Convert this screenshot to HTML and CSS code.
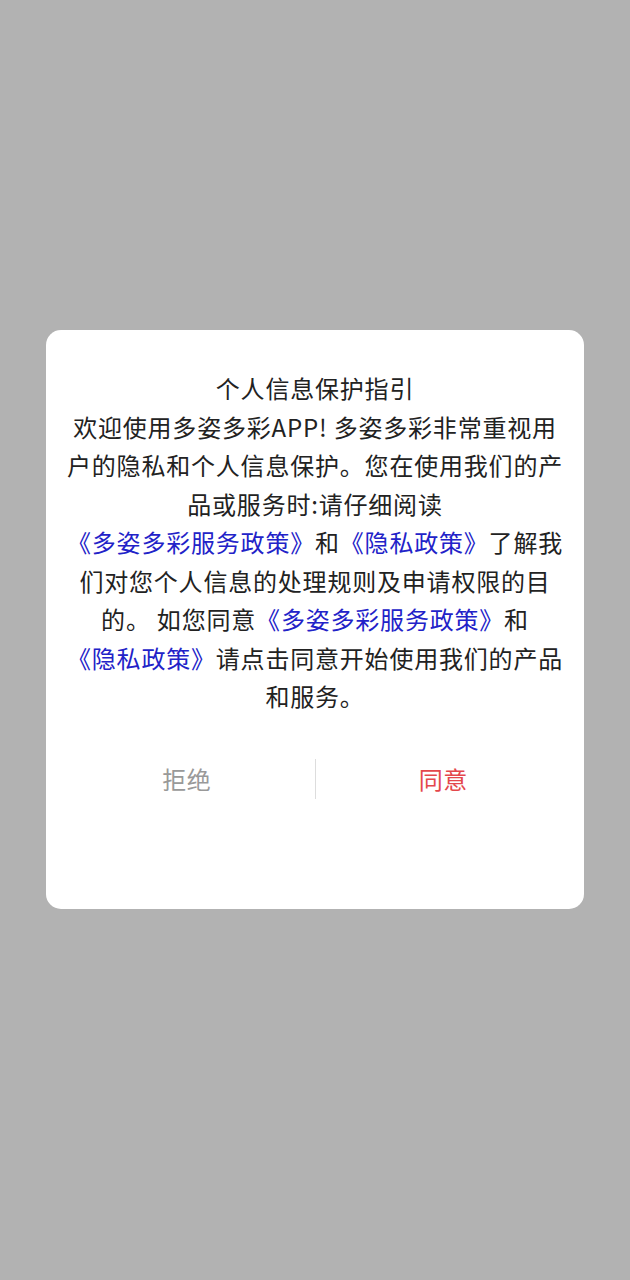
FILE: index.html
```html
<!DOCTYPE html>
<html lang="zh-CN">
  <head>
    <meta charset="UTF-8" />
    <meta name="viewport" content="width=device-width, initial-scale=1.0" />
    <title>个人信息保护指引</title>
    <link rel="stylesheet" href="styles.css">
  </head>
  <body>
    <div class="dialog">
      <div class="content">
        <p>个人信息保护指引</p>
        <p>
          欢迎使用多姿多彩APP! 多姿多彩非常重视用户的隐私和个人信息保护。您在使用我们的产品或服务时:请仔细阅读<br />
          <a class="link" href="#">《多姿多彩服务政策》</a>和<a class="link" href="#">《隐私政策》</a>了解我们对您个人信息的处理规则及申请权限的目的。 如您同意<a class="link" href="#">《多姿多彩服务政策》</a>和<br />
          <a class="link" href="#">《隐私政策》</a>请点击同意开始使用我们的产品和服务。
        </p>
      </div>
      <div class="buttons">
        <button class="btn refuse">拒绝</button>
        <span class="divider"></span>
        <button class="btn agree">同意</button>
      </div>
    </div>
  </body>
</html>
```

FILE: styles.css
```css
body {
  font-family: "Noto Sans CJK SC", "Noto Sans", sans-serif;
  margin: 0;
  padding: 0;
  background-color: #b2b2b2;
}
.dialog {
  width: 538px;
  height: 579px;
  margin: 330px 0 0 46px;
  background-color: #fff;
  border-radius: 15px;
  box-sizing: border-box;
  padding: 39px 19px 0;
}
.content {
  text-align: center;
  font-size: 24px;
  letter-spacing: 0.8px;
  line-height: 38.5px;
  color: #222;
}
.content p {
  margin: 0;
}
.link {
  color: #2222c8;
  text-decoration: none;
}
.buttons {
  display: flex;
  align-items: center;
  margin: 43px -6px 0;
  height: 40px;
}
.btn {
  flex: 1;
  background: none;
  border: none;
  padding: 0;
  font-family: inherit;
  font-size: 24px;
  letter-spacing: 0.5px;
  line-height: 40px;
  cursor: pointer;
}
.refuse {
  color: #999;
}
.agree {
  color: #e4474c;
}
.divider {
  width: 1px;
  height: 40px;
  background-color: #ddd;
}
```
